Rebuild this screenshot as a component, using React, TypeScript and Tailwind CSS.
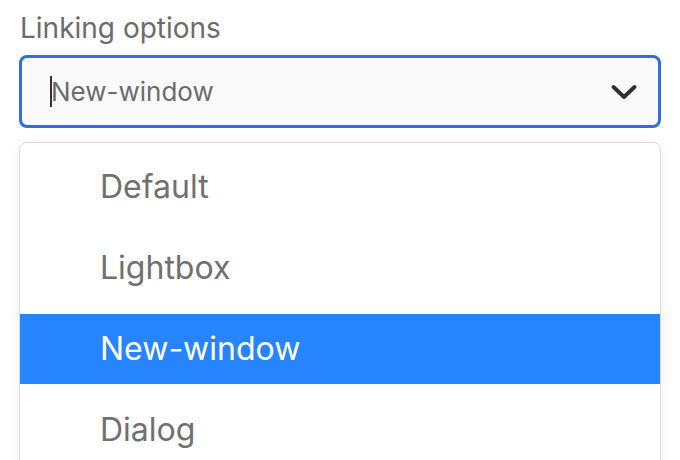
export default function App() {
  const options = ['Default', 'Lightbox', 'New-window', 'Dialog'];
  const selected = 'New-window';

  return (
    <div
      className="w-[680px] h-[460px] overflow-hidden bg-white px-[19px] pt-[8px]"
      style={{ fontFamily: 'Inter, "Noto Sans", sans-serif' }}
    >
      {/* Label */}
      <div className="text-[28px] leading-[40px] text-[#6b6b6b] pl-[1px]">Linking options</div>

      {/* Select control */}
      <div className="mt-[7px] h-[73px] w-[642px] rounded-[8px] border-[3px] border-[#2b6fe6] bg-[#fafafa] flex items-center pl-[28px] pr-[21px]">
        <div className="flex-1 flex items-center">
          <span className="w-[2px] h-[31px] bg-[#333]" />
          <span className="text-[26px] text-[#6b6b6b] -ml-[1px]">New-window</span>
        </div>
        <svg width="26" height="16" viewBox="0 0 26 16" fill="none">
          <path d="M2.5 3 L13 13 L23.5 3" stroke="#2f2f2f" strokeWidth="3.8" strokeLinecap="round" strokeLinejoin="round" />
        </svg>
      </div>

      {/* Menu */}
      <div className="mt-[14px] w-[642px] h-[360px] rounded-[8px] border border-[#dcdcdc] bg-white shadow-[0_2px_14px_rgba(0,0,0,0.07)] pt-[9px] flex flex-col gap-[11px]">
        {options.map((opt) => (
          <div
            key={opt}
            className={
              opt === selected
                ? 'h-[70px] shrink-0 flex items-center pl-[80px] text-[32px] bg-[#2684ff] text-white'
                : 'h-[70px] shrink-0 flex items-center pl-[80px] text-[32px] text-[#707070]'
            }
          >
            {opt}
          </div>
        ))}
      </div>
    </div>
  );
}
